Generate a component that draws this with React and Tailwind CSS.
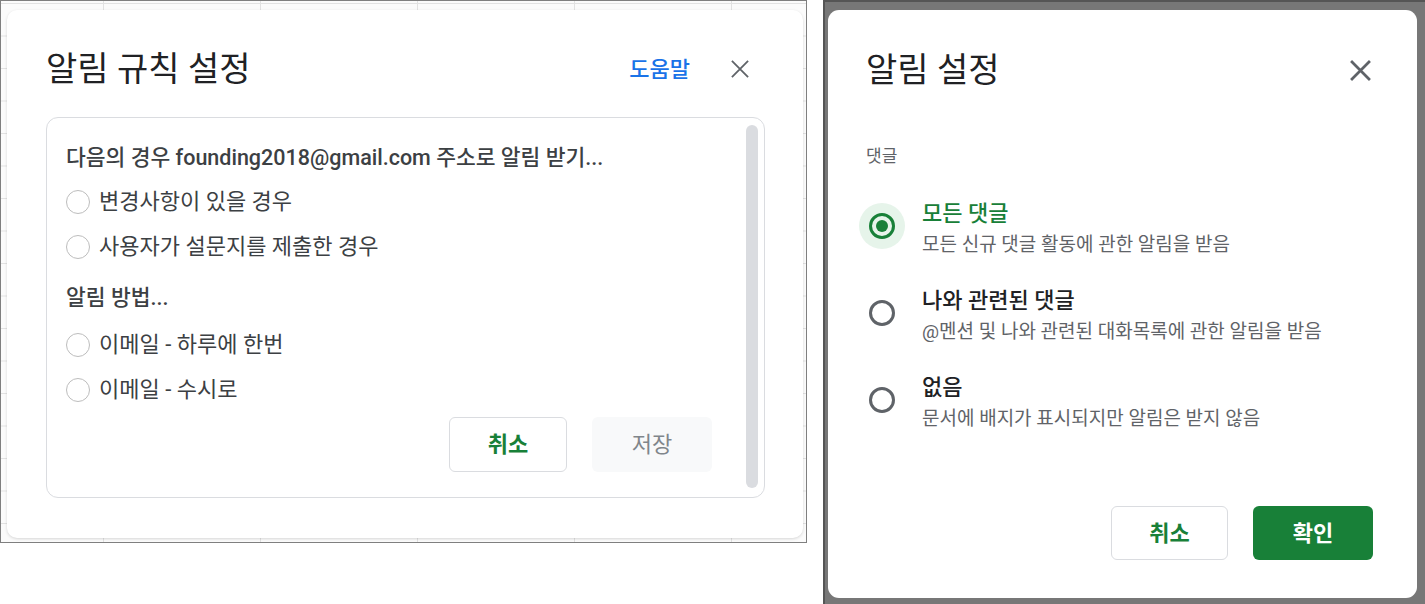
const font = "font-['Roboto','Noto_Sans_CJK_KR',sans-serif]";

const CloseIcon = ({ size, stroke }) => (
  <svg width={size} height={size} viewBox="0 0 20 20" className="shrink-0 text-[#5f6368]">
    <path d="M1 1L19 19M19 1L1 19" stroke="currentColor" strokeWidth={stroke} fill="none" />
  </svg>
);

const GrayRadio = () => (
  <span className="w-[24px] h-[24px] rounded-full border-[1.5px] border-[#bdbdbd] shrink-0" />
);

const RuleRow = ({ label }) => (
  <div className="flex items-center h-[45px]">
    <GrayRadio />
    <span className="ml-[9px] text-[22px] text-[#3c4043] whitespace-nowrap">{label}</span>
  </div>
);

const RuleDialog = () => (
  <div className="w-[807px] h-[543px] shrink-0 border border-[#7f7f7f] pl-[6px] pt-[9px] pr-[3px] pb-[4px] bg-[#fbfbfb] bg-[linear-gradient(to_right,#e2e2e2_1px,transparent_1px),linear-gradient(to_bottom,#e2e2e2_1px,transparent_1px)] bg-[size:157px_32.5px] bg-[position:102px_2px]">
    <div className="h-full bg-white rounded-[10px] shadow-[0_1px_3px_rgba(0,0,0,0.15)] flex flex-col">
      <div className="mt-[41px] h-[36px] flex items-center pl-[39px] pr-[54px]">
        <h2 className="text-[34px] text-[#202124] leading-none whitespace-nowrap">알림 규칙 설정</h2>
        <span className="ml-auto text-[22px] font-medium text-[#1a73e8]">도움말</span>
        <span className="ml-[41px]">
          <CloseIcon size={18} stroke={2} />
        </span>
      </div>

      <div className="mt-[30px] ml-[39px] mr-[38px] h-[381px] border border-[#dadce0] rounded-[12px] flex">
        <div className="flex-1 pl-[19px] pr-[34px] flex flex-col">
          <div className="mt-[26px] h-[28px] flex items-center text-[21.5px] font-medium text-[#3c4043] whitespace-nowrap">
            다음의 경우 founding2018@gmail.com 주소로 알림 받기...
          </div>
          <div className="mt-[7px]">
            <RuleRow label="변경사항이 있을 경우" />
            <RuleRow label="사용자가 설문지를 제출한 경우" />
          </div>
          <div className="mt-[15px] h-[28px] flex items-center text-[21.5px] font-medium text-[#3c4043]">
            알림 방법...
          </div>
          <div className="mt-[10px]">
            <RuleRow label="이메일 - 하루에 한번" />
            <RuleRow label="이메일 - 수시로" />
          </div>
          <div className="mt-[5px] flex justify-end gap-[25px]">
            <button className="w-[118px] h-[55px] border border-[#dadce0] rounded-[6px] text-[22px] font-bold text-[#188038]">
              취소
            </button>
            <button className="w-[120px] h-[55px] rounded-[6px] bg-[#f8f9fa] text-[22px] text-[#80868b]">
              저장
            </button>
          </div>
        </div>
        <div className="w-[12px] mr-[6px] mt-[7px] mb-[9px] rounded-full bg-[#dadce0]" />
      </div>
    </div>
  </div>
);

const Radio = ({ on }) =>
  on ? (
    <span className="w-[46px] h-[46px] rounded-full bg-[#e6f4ea] flex items-center justify-center">
      <span className="w-[26px] h-[26px] rounded-full border-[3px] border-[#188038] flex items-center justify-center">
        <span className="w-[12px] h-[12px] rounded-full bg-[#188038]" />
      </span>
    </span>
  ) : (
    <span className="w-[46px] h-[46px] flex items-center justify-center">
      <span className="w-[26px] h-[26px] rounded-full border-[3px] border-[#5f6368]" />
    </span>
  );

const options = [
  { title: "모든 댓글", desc: "모든 신규 댓글 활동에 관한 알림을 받음", on: true },
  { title: "나와 관련된 댓글", desc: "@멘션 및 나와 관련된 대화목록에 관한 알림을 받음", on: false },
  { title: "없음", desc: "문서에 배지가 표시되지만 알림은 받지 않음", on: false },
];

const NotifyDialog = () => (
  <div className="w-[602px] h-[604px] shrink-0 bg-[#777777] border-l-[2px] border-t-[2px] border-[#555555] pl-[3px] pt-[8px] pr-[8px] pb-[6px]">
    <div className="h-full bg-white rounded-[11px] flex flex-col">
      <div className="mt-[42px] h-[36px] flex items-center pl-[38px] pr-[46px]">
        <h2 className="text-[34px] text-[#202124] leading-none whitespace-nowrap">알림 설정</h2>
        <span className="ml-auto">
          <CloseIcon size={21} stroke={2.6} />
        </span>
      </div>

      <div className="mt-[59px] h-[20px] flex items-center pl-[38px] text-[17px] text-[#5f6368]">댓글</div>

      <div className="mt-[33px] pl-[31px] flex flex-col gap-[31px]">
        {options.map((o) => (
          <div key={o.title} className="flex h-[56px]">
            <div className="mt-[3px]">
              <Radio on={o.on} />
            </div>
            <div className="ml-[17px] flex flex-col">
              <div
                className={`h-[26px] flex items-center text-[22px] font-medium whitespace-nowrap ${o.on ? "text-[#188038]" : "text-[#202124]"}`}
              >
                {o.title}
              </div>
              <div className="mt-[7px] h-[24px] flex items-center text-[19px] text-[#5f6368] whitespace-nowrap">
                {o.desc}
              </div>
            </div>
          </div>
        ))}
      </div>

      <div className="mt-[76px] flex justify-end gap-[25px] pr-[44px]">
        <button className="w-[117px] h-[54px] border border-[#dadce0] rounded-[6px] text-[22px] font-bold text-[#188038]">
          취소
        </button>
        <button className="w-[120px] h-[54px] rounded-[6px] bg-[#188038] text-[22px] font-bold text-white">
          확인
        </button>
      </div>
    </div>
  </div>
);

export default function App() {
  return (
    <div className={`w-[1425px] h-[604px] bg-white flex items-start gap-[16px] ${font}`}>
      <RuleDialog />
      <NotifyDialog />
    </div>
  );
}
